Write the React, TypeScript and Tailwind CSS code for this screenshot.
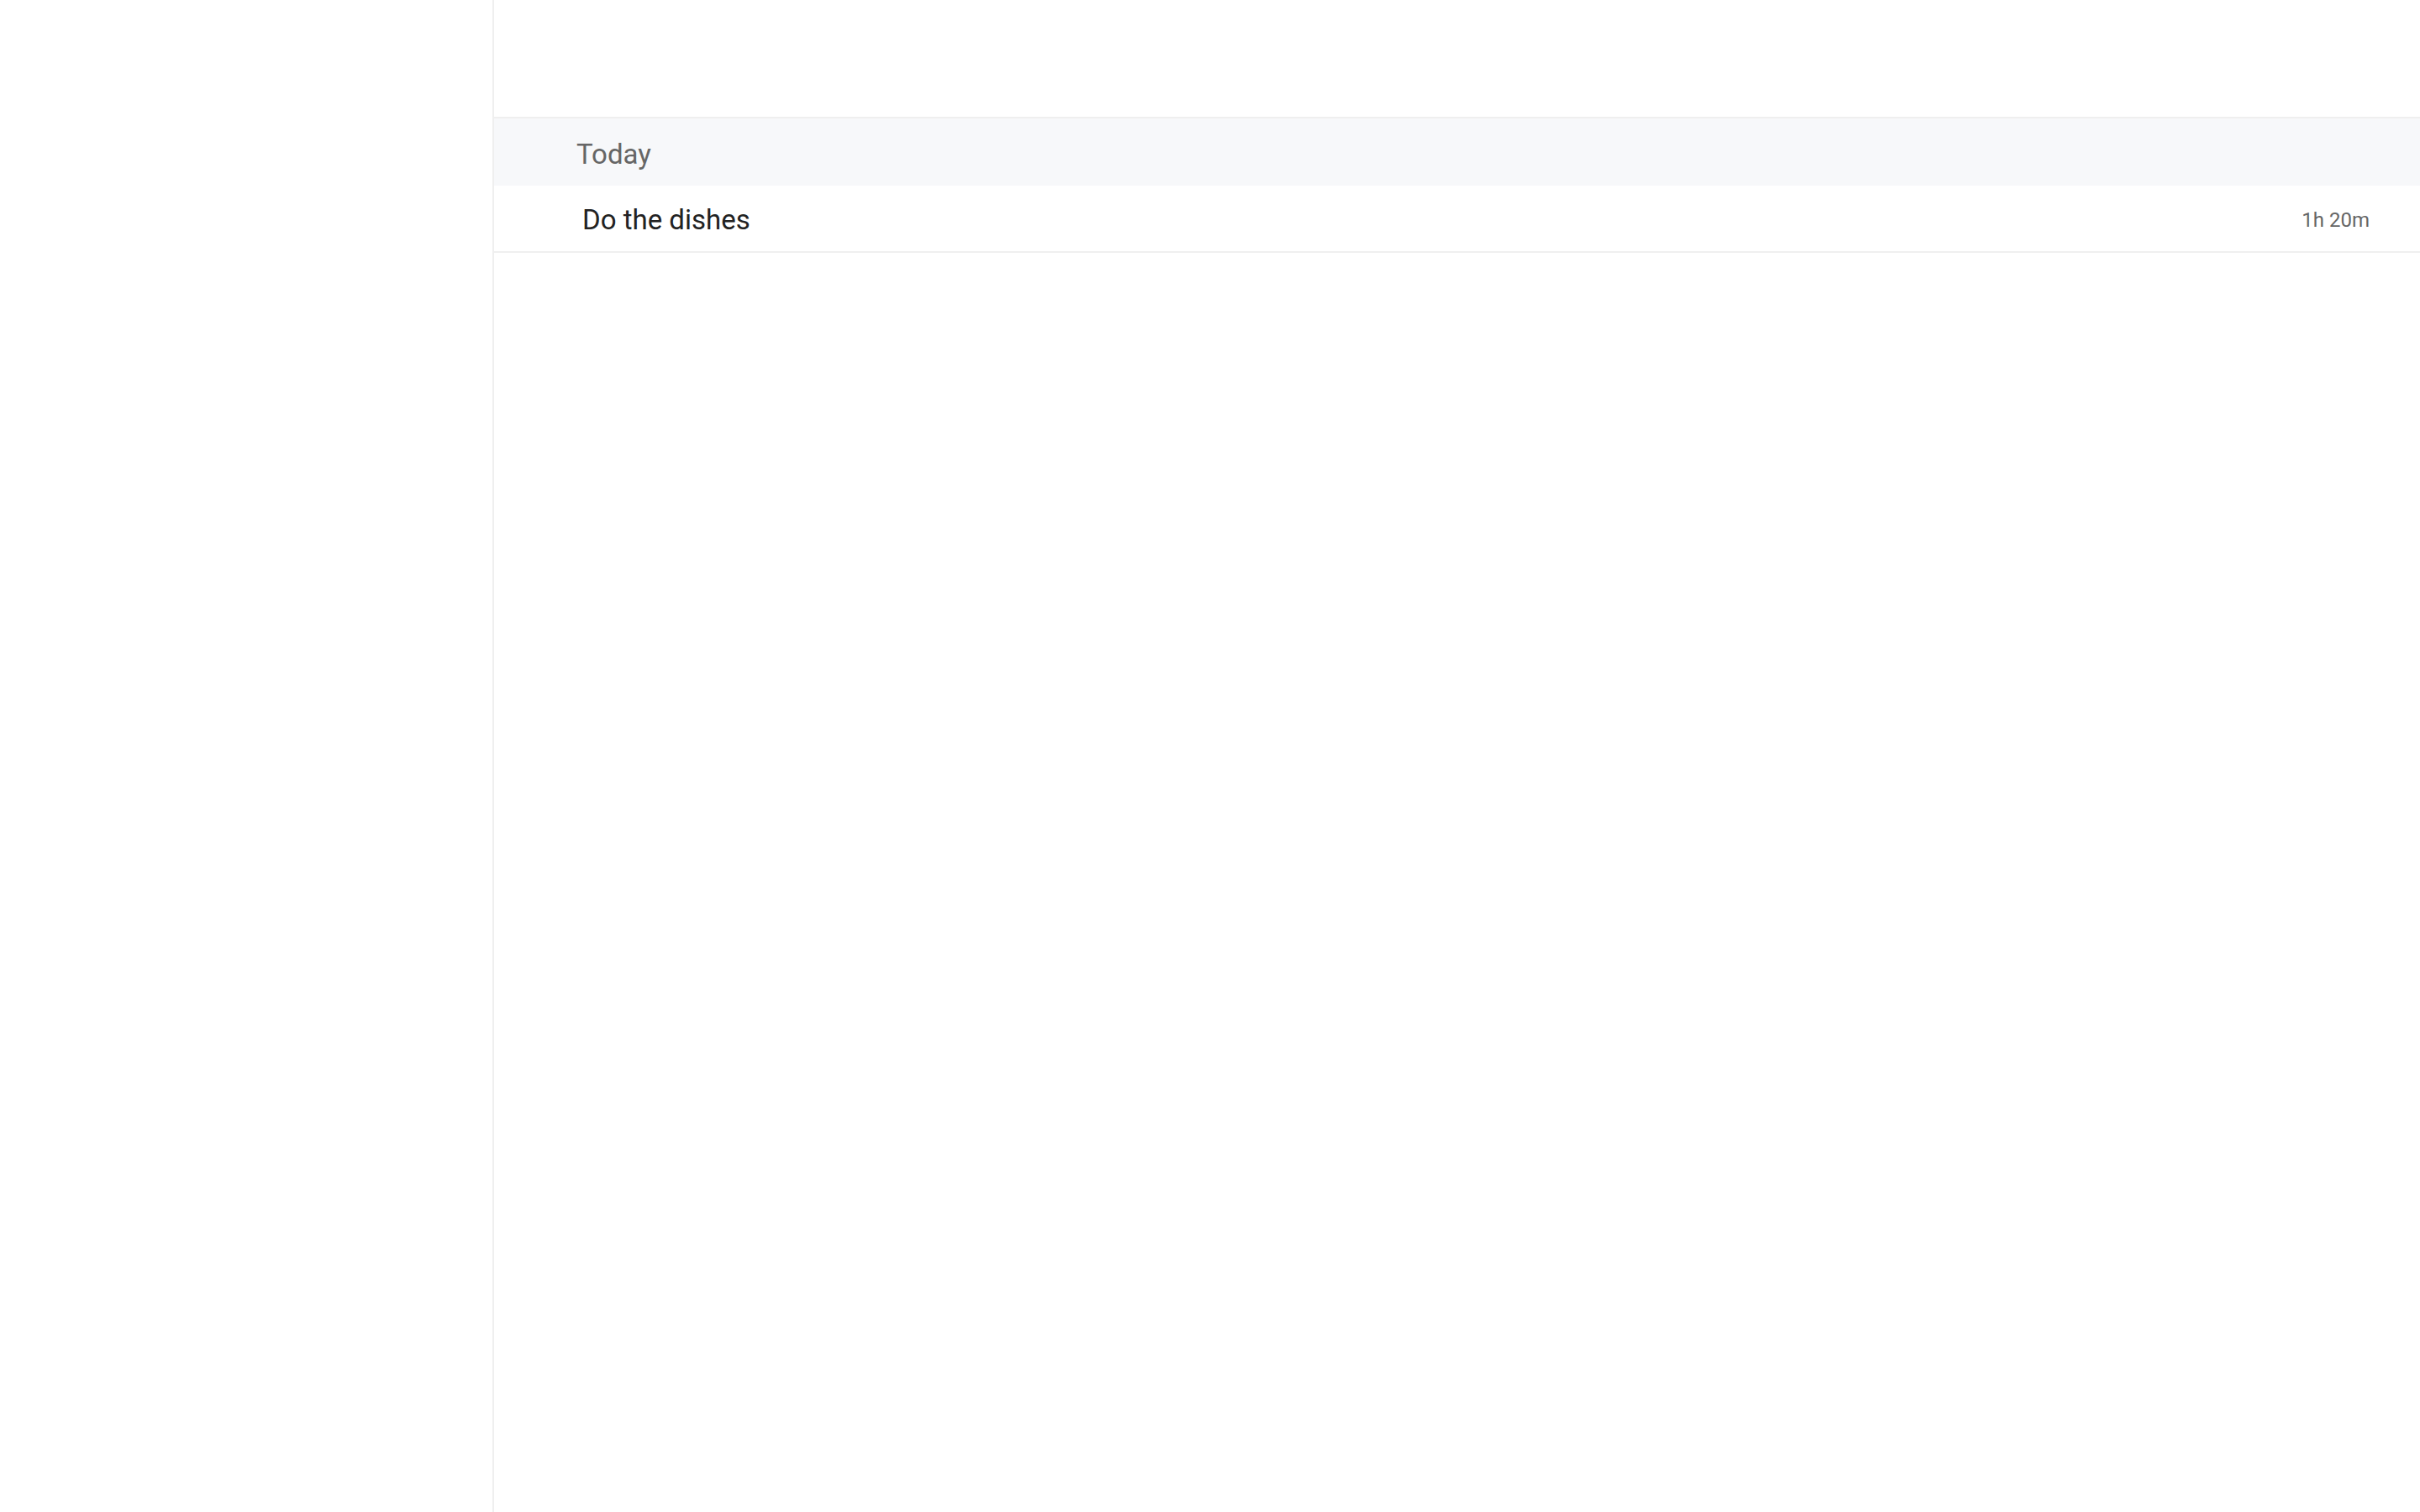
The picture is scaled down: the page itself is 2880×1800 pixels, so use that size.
export default function App() {
  return (
    <div className="flex h-screen w-full bg-white" style={{ fontFamily: "Roboto, 'Liberation Sans', sans-serif" }}>
      <aside className="w-[588px] shrink-0 border-r-2 border-[#efefef] bg-white" />
      <main className="flex flex-1 flex-col">
        <header className="h-[141px] shrink-0 border-b-2 border-[#efefef]" />
        <div className="flex h-[80px] items-center bg-[#f7f8fa] pl-[98px] pt-[5px] text-[33px] text-[#666666]">
          Today
        </div>
        <div className="flex h-[80px] items-center justify-between border-b-2 border-[#f0f0f0] pl-[105px] pr-[60px] pt-[4px]">
          <span className="text-[33px] text-[#222222]">Do the dishes</span>
          <span className="text-[24px] text-[#666666]">1h 20m</span>
        </div>
      </main>
    </div>
  );
}
